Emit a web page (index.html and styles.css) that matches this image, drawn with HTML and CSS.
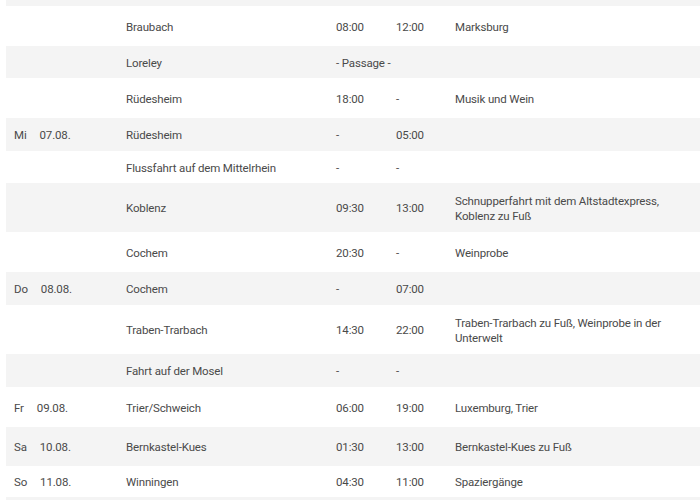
FILE: index.html
```html
<!DOCTYPE html>
<html lang="de">
<head>
<meta charset="utf-8">
<title>Reiseverlauf</title>
<link rel="stylesheet" href="styles.css">
</head>
<body>
<table class="plan">
  <colgroup>
    <col class="c-day">
    <col class="c-loc">
    <col class="c-arr">
    <col class="c-dep">
    <col class="c-desc">
  </colgroup>
  <tbody>
    <tr class="r-cut"><td></td><td></td><td></td><td></td><td></td></tr>
    <tr class="r-40"><td></td><td>Braubach</td><td>08:00</td><td>12:00</td><td>Marksburg</td></tr>
    <tr class="r-32"><td></td><td>Loreley</td><td colspan="3">- Passage -</td></tr>
    <tr class="r-40"><td></td><td>Rüdesheim</td><td>18:00</td><td>-</td><td>Musik und Wein</td></tr>
    <tr class="r-33"><td><span class="wd">Mi</span>07.08.</td><td>Rüdesheim</td><td>-</td><td>05:00</td><td></td></tr>
    <tr class="r-32"><td></td><td>Flussfahrt auf dem Mittelrhein</td><td>-</td><td>-</td><td></td></tr>
    <tr class="r-49"><td></td><td>Koblenz</td><td>09:30</td><td>13:00</td><td>Schnupperfahrt mit dem Altstadtexpress,<br>Koblenz zu Fuß</td></tr>
    <tr class="r-40"><td></td><td>Cochem</td><td>20:30</td><td>-</td><td>Weinprobe</td></tr>
    <tr class="r-33"><td><span class="wd">Do</span>08.08.</td><td>Cochem</td><td>-</td><td>07:00</td><td></td></tr>
    <tr class="r-49"><td></td><td>Traben-Trarbach</td><td>14:30</td><td>22:00</td><td>Traben-Trarbach zu Fuß, Weinprobe in der<br>Unterwelt</td></tr>
    <tr class="r-33"><td></td><td>Fahrt auf der Mosel</td><td>-</td><td>-</td><td></td></tr>
    <tr class="r-40"><td><span class="wd">Fr</span>09.08.</td><td>Trier/Schweich</td><td>06:00</td><td>19:00</td><td>Luxemburg, Trier</td></tr>
    <tr class="r-39"><td><span class="wd">Sa</span>10.08.</td><td>Bernkastel-Kues</td><td>01:30</td><td>13:00</td><td>Bernkastel-Kues zu Fuß</td></tr>
    <tr class="r-31"><td><span class="wd">So</span>11.08.</td><td>Winningen</td><td>04:30</td><td>11:00</td><td>Spaziergänge</td></tr>
    <tr class="r-40"><td></td><td></td><td></td><td></td><td></td></tr>
  </tbody>
</table>
</body>
</html>
```

FILE: styles.css
```css
html, body {
  margin: 0;
  padding: 0;
  background: #ffffff;
  overflow: hidden;
}

body {
  padding-left: 6px;
  font-family: Roboto, "Liberation Sans", sans-serif;
  font-size: 11.5px;
  letter-spacing: -0.15px;
  line-height: 15px;
  color: #4a4a4a;
}

.plan {
  width: 694px;
  border-collapse: collapse;
  table-layout: fixed;
}

.c-day { width: 112px; }
.c-loc { width: 210px; }
.c-arr { width: 60px; }
.c-dep { width: 59px; }
.c-desc { width: 253px; }

.plan td {
  padding: 2px 8px 0;
  vertical-align: middle;
  white-space: nowrap;
}

.plan tr:nth-child(odd) td {
  background: #f4f4f4;
}

.wd {
  margin-right: 13px;
}

/* cell heights are content heights: row height minus the 2px top padding */
.r-cut td { height: 6px; line-height: 0; padding: 0; }
.r-31 td { height: 29px; }
.r-32 td { height: 30px; }
.r-33 td { height: 31px; }
.r-39 td { height: 37px; }
.r-40 td { height: 38px; }
.r-49 td { height: 47px; }
```
